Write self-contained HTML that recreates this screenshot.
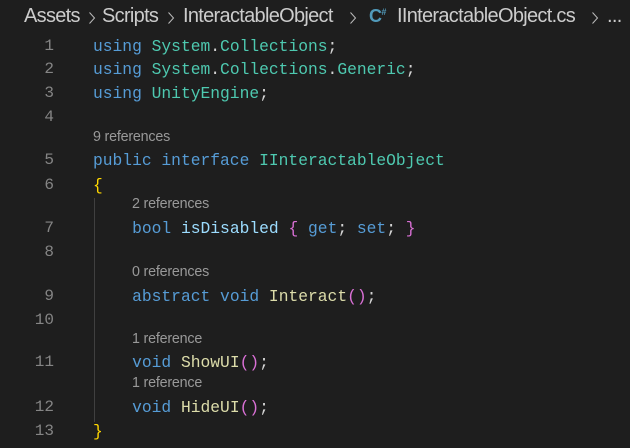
<!DOCTYPE html><html><head><style>
body{margin:0;width:630px;height:448px;background:#1e1e1e;overflow:hidden;position:relative}
.bc span{position:absolute;top:5px;font:20px "Liberation Sans",sans-serif;color:#cccccc;letter-spacing:-0.7px;white-space:pre}
.bc svg{position:absolute;top:11px}
.r{position:absolute;left:0;height:22px;line-height:22px;white-space:pre}
.n{position:absolute;width:54px;text-align:right;font:16px "Liberation Mono",monospace;color:#858585}
.c{position:absolute;left:93px;font:16.3px "Liberation Mono",monospace;color:#d4d4d4}
.l{position:absolute;left:93px;font:14.3px "Liberation Sans",sans-serif;color:#999999;letter-spacing:-0.2px}
.k{color:#569cd6}.t{color:#4ec9b0}.y{color:#ffd700}.p{color:#9cdcfe}.m{color:#dcdcaa}.b{color:#da70d6}
.g{position:absolute;left:94px;width:1px;background:#404040}
</style></head><body>
<div class="bc">
<span style="left:24px">Assets</span>
<svg style="left:88px" width="8" height="14"><polyline points="1.5,1.5 6.5,7 1.5,12.5" fill="none" stroke="#bbbbbb" stroke-width="1"/></svg>
<span style="left:102px">Scripts</span>
<svg style="left:167px" width="8" height="14"><polyline points="1.5,1.5 6.5,7 1.5,12.5" fill="none" stroke="#bbbbbb" stroke-width="1"/></svg>
<span style="left:183px">InteractableObject</span>
<svg style="left:349px" width="8" height="14"><polyline points="1.5,1.5 6.5,7 1.5,12.5" fill="none" stroke="#bbbbbb" stroke-width="1"/></svg>
<span style="left:369px;color:#519aba;font-weight:bold;font-size:18px;top:6px">C<sup style="font-size:9px">#</sup></span>
<span style="left:397px">IInteractableObject.cs</span>
<svg style="left:591px" width="8" height="14"><polyline points="1.5,1.5 6.5,7 1.5,12.5" fill="none" stroke="#bbbbbb" stroke-width="1"/></svg>
<span style="left:607px">...</span>
</div>
<div class="g" style="top:198px;height:224px"></div>
<div class="r" style="top:37px"><span class="n">1</span><span class="c"><span class="k">using</span> <span class="t">System</span>.<span class="t">Collections</span>;</span></div>
<div class="r" style="top:60px"><span class="n">2</span><span class="c"><span class="k">using</span> <span class="t">System</span>.<span class="t">Collections</span>.<span class="t">Generic</span>;</span></div>
<div class="r" style="top:84px"><span class="n">3</span><span class="c"><span class="k">using</span> <span class="t">UnityEngine</span>;</span></div>
<div class="r" style="top:108px"><span class="n">4</span></div>
<div class="r" style="top:129px"><span class="l">9 references</span></div>
<div class="r" style="top:151px"><span class="n">5</span><span class="c"><span class="k">public</span> <span class="k">interface</span> <span class="t">IInteractableObject</span></span></div>
<div class="r" style="top:176px"><span class="n">6</span><span class="c"><span class="y">{</span></span></div>
<div class="r" style="top:196px"><span class="l" style="left:132px">2 references</span></div>
<div class="r" style="top:219px"><span class="n">7</span><span class="c">    <span class="k">bool</span> <span class="p">isDisabled</span> <span class="b">{</span> <span class="k">get</span>; <span class="k">set</span>; <span class="b">}</span></span></div>
<div class="r" style="top:243px"><span class="n">8</span></div>
<div class="r" style="top:264px"><span class="l" style="left:132px">0 references</span></div>
<div class="r" style="top:287px"><span class="n">9</span><span class="c">    <span class="k">abstract</span> <span class="k">void</span> <span class="m">Interact</span><span class="b">()</span>;</span></div>
<div class="r" style="top:311px"><span class="n">10</span></div>
<div class="r" style="top:331px"><span class="l" style="left:132px">1 reference</span></div>
<div class="r" style="top:353px"><span class="n">11</span><span class="c">    <span class="k">void</span> <span class="m">ShowUI</span><span class="b">()</span>;</span></div>
<div class="r" style="top:375px"><span class="l" style="left:132px">1 reference</span></div>
<div class="r" style="top:398px"><span class="n">12</span><span class="c">    <span class="k">void</span> <span class="m">HideUI</span><span class="b">()</span>;</span></div>
<div class="r" style="top:422px"><span class="n">13</span><span class="c"><span class="y">}</span></span></div>
</body></html>
